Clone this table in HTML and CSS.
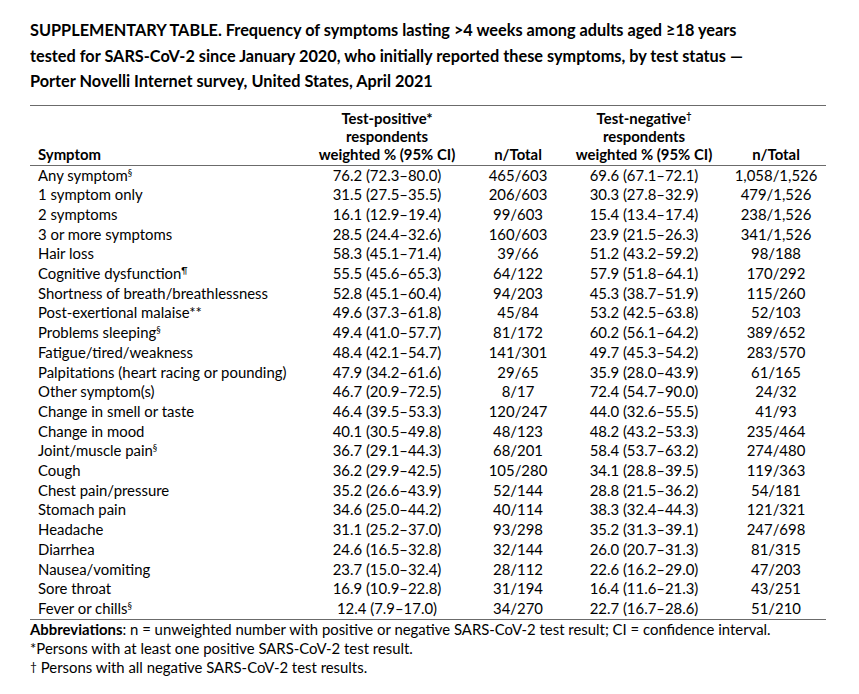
FILE: index.html
```html
<!DOCTYPE html>
<html>
<head>
<meta charset="utf-8">
<link rel="stylesheet" href="styles.css">
</head>
<body>
<div class="page">
  <h1 class="title">SUPPLEMENTARY TABLE. Frequency of symptoms lasting &gt;4 weeks among adults aged ≥18 years<br>tested for SARS-CoV-2 since January 2020, who initially reported these symptoms, by test status —<br>Porter Novelli Internet survey, United States, April 2021</h1>
  <table class="data">
    <colgroup>
      <col class="c1"><col class="c2"><col class="c3"><col class="c4"><col class="c5">
    </colgroup>
    <thead>
      <tr>
        <th class="sym">Symptom</th>
        <th>Test-positive*<br>respondents<br>weighted % (95% CI)</th>
        <th>n/Total</th>
        <th>Test-negative<sup>†</sup><br>respondents<br>weighted % (95% CI)</th>
        <th>n/Total</th>
      </tr>
    </thead>
    <tbody>
      <tr><td>Any symptom<sup>§</sup></td><td>76.2 (72.3–80.0)</td><td>465/603</td><td>69.6 (67.1–72.1)</td><td>1,058/1,526</td></tr>
      <tr><td>1 symptom only</td><td>31.5 (27.5–35.5)</td><td>206/603</td><td>30.3 (27.8–32.9)</td><td>479/1,526</td></tr>
      <tr><td>2 symptoms</td><td>16.1 (12.9–19.4)</td><td>99/603</td><td>15.4 (13.4–17.4)</td><td>238/1,526</td></tr>
      <tr><td>3 or more symptoms</td><td>28.5 (24.4–32.6)</td><td>160/603</td><td>23.9 (21.5–26.3)</td><td>341/1,526</td></tr>
      <tr><td>Hair loss</td><td>58.3 (45.1–71.4)</td><td>39/66</td><td>51.2 (43.2–59.2)</td><td>98/188</td></tr>
      <tr><td>Cognitive dysfunction<sup>¶</sup></td><td>55.5 (45.6–65.3)</td><td>64/122</td><td>57.9 (51.8–64.1)</td><td>170/292</td></tr>
      <tr><td>Shortness of breath/breathlessness</td><td>52.8 (45.1–60.4)</td><td>94/203</td><td>45.3 (38.7–51.9)</td><td>115/260</td></tr>
      <tr><td>Post-exertional malaise**</td><td>49.6 (37.3–61.8)</td><td>45/84</td><td>53.2 (42.5–63.8)</td><td>52/103</td></tr>
      <tr><td>Problems sleeping<sup>§</sup></td><td>49.4 (41.0–57.7)</td><td>81/172</td><td>60.2 (56.1–64.2)</td><td>389/652</td></tr>
      <tr><td>Fatigue/tired/weakness</td><td>48.4 (42.1–54.7)</td><td>141/301</td><td>49.7 (45.3–54.2)</td><td>283/570</td></tr>
      <tr><td>Palpitations (heart racing or pounding)</td><td>47.9 (34.2–61.6)</td><td>29/65</td><td>35.9 (28.0–43.9)</td><td>61/165</td></tr>
      <tr><td>Other symptom(s)</td><td>46.7 (20.9–72.5)</td><td>8/17</td><td>72.4 (54.7–90.0)</td><td>24/32</td></tr>
      <tr><td>Change in smell or taste</td><td>46.4 (39.5–53.3)</td><td>120/247</td><td>44.0 (32.6–55.5)</td><td>41/93</td></tr>
      <tr><td>Change in mood</td><td>40.1 (30.5–49.8)</td><td>48/123</td><td>48.2 (43.2–53.3)</td><td>235/464</td></tr>
      <tr><td>Joint/muscle pain<sup>§</sup></td><td>36.7 (29.1–44.3)</td><td>68/201</td><td>58.4 (53.7–63.2)</td><td>274/480</td></tr>
      <tr><td>Cough</td><td>36.2 (29.9–42.5)</td><td>105/280</td><td>34.1 (28.8–39.5)</td><td>119/363</td></tr>
      <tr><td>Chest pain/pressure</td><td>35.2 (26.6–43.9)</td><td>52/144</td><td>28.8 (21.5–36.2)</td><td>54/181</td></tr>
      <tr><td>Stomach pain</td><td>34.6 (25.0–44.2)</td><td>40/114</td><td>38.3 (32.4–44.3)</td><td>121/321</td></tr>
      <tr><td>Headache</td><td>31.1 (25.2–37.0)</td><td>93/298</td><td>35.2 (31.3–39.1)</td><td>247/698</td></tr>
      <tr><td>Diarrhea</td><td>24.6 (16.5–32.8)</td><td>32/144</td><td>26.0 (20.7–31.3)</td><td>81/315</td></tr>
      <tr><td>Nausea/vomiting</td><td>23.7 (15.0–32.4)</td><td>28/112</td><td>22.6 (16.2–29.0)</td><td>47/203</td></tr>
      <tr><td>Sore throat</td><td>16.9 (10.9–22.8)</td><td>31/194</td><td>16.4 (11.6–21.3)</td><td>43/251</td></tr>
      <tr><td>Fever or chills<sup>§</sup></td><td>12.4 (7.9–17.0)</td><td>34/270</td><td>22.7 (16.7–28.6)</td><td>51/210</td></tr>
    </tbody>
  </table>
  <div class="notes">
    <p><b>Abbreviations</b>: n = unweighted number with positive or negative SARS-CoV-2 test result; CI = confidence interval.</p>
    <p>*Persons with at least one positive SARS-CoV-2 test result.</p>
    <p><sup class="dag">†</sup> Persons with all negative SARS-CoV-2 test results.</p>
  </div>
</div>
</body>
</html>
```
FILE: styles.css
```css
html, body {
  margin: 0;
  padding: 0;
  background: #ffffff;
}
body {
  font-family: Lato, "Open Sans", "Liberation Sans", sans-serif;
  color: #000;
}
.page {
  padding: 17px 0 0 30px;
  width: 796px;
}
.title {
  margin: 0;
  font-size: 16.3px;
  font-weight: 700;
  line-height: 25.5px;
  white-space: nowrap;
}
.data {
  margin-top: 11px;
  width: 796px;
  border-collapse: collapse;
  table-layout: fixed;
  font-size: 14.9px;
}
.c1 { width: 270px; }
.c2 { width: 174px; }
.c3 { width: 88px; }
.c4 { width: 164px; }
.c5 { width: 100px; }
.data thead tr {
  border-top: 1px solid #6b6b6b;
  border-bottom: 1px solid #6b6b6b;
}
.data th {
  font-weight: 700;
  text-align: center;
  vertical-align: bottom;
  line-height: 18px;
  padding: 3px 0 2px 0;
}
.data th.sym {
  text-align: left;
  padding-left: 8px;
}
.data tbody tr:last-child {
  border-bottom: 1px solid #6b6b6b;
}
.data td {
  text-align: center;
  padding: 0;
  line-height: 19.7px;
  height: 19.7px;
  white-space: nowrap;
}
.data td:first-child {
  text-align: left;
  padding-left: 8px;
}
sup {
  font-size: 9px;
  line-height: 0;
  vertical-align: 5px;
}
.notes {
  font-size: 14.9px;
}
.notes p {
  margin: 0;
  line-height: 19px;
}
.notes sup.dag {
  font-size: 12px;
  vertical-align: 2px;
}
```
